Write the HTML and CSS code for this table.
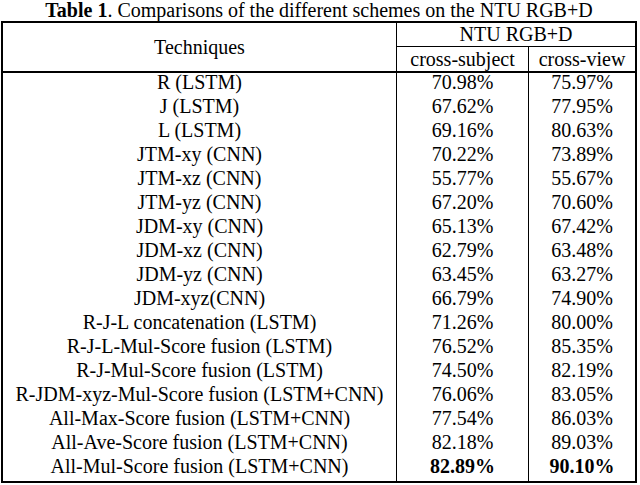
FILE: index.html
```html
<!DOCTYPE html>
<html>
<head>
<meta charset="utf-8">
<link rel="stylesheet" href="styles.css">
</head>
<body>
<div class="wrap">
<table class="cmp">
<caption><b>Table 1</b>. Comparisons of the different schemes on the NTU RGB+D</caption>
<colgroup><col class="c1"><col class="c2"><col class="c3"></colgroup>
<thead>
<tr class="h1"><th rowspan="2" class="tech">Techniques</th><th colspan="2" class="ntu">NTU RGB+D</th></tr>
<tr class="h2"><th class="sub">cross-subject</th><th class="view">cross-view</th></tr>
</thead>
<tbody>
<tr><td>R (LSTM)</td><td>70.98%</td><td>75.97%</td></tr>
<tr><td>J (LSTM)</td><td>67.62%</td><td>77.95%</td></tr>
<tr><td>L (LSTM)</td><td>69.16%</td><td>80.63%</td></tr>
<tr><td>JTM-xy (CNN)</td><td>70.22%</td><td>73.89%</td></tr>
<tr><td>JTM-xz (CNN)</td><td>55.77%</td><td>55.67%</td></tr>
<tr><td>JTM-yz (CNN)</td><td>67.20%</td><td>70.60%</td></tr>
<tr><td>JDM-xy (CNN)</td><td>65.13%</td><td>67.42%</td></tr>
<tr><td>JDM-xz (CNN)</td><td>62.79%</td><td>63.48%</td></tr>
<tr><td>JDM-yz (CNN)</td><td>63.45%</td><td>63.27%</td></tr>
<tr><td>JDM-xyz(CNN)</td><td>66.79%</td><td>74.90%</td></tr>
<tr><td>R-J-L concatenation (LSTM)</td><td>71.26%</td><td>80.00%</td></tr>
<tr><td>R-J-L-Mul-Score fusion (LSTM)</td><td>76.52%</td><td>85.35%</td></tr>
<tr><td>R-J-Mul-Score fusion (LSTM)</td><td>74.50%</td><td>82.19%</td></tr>
<tr><td>R-JDM-xyz-Mul-Score fusion (LSTM+CNN)</td><td>76.06%</td><td>83.05%</td></tr>
<tr><td>All-Max-Score fusion (LSTM+CNN)</td><td>77.54%</td><td>86.03%</td></tr>
<tr><td>All-Ave-Score fusion (LSTM+CNN)</td><td>82.18%</td><td>89.03%</td></tr>
<tr><td>All-Mul-Score fusion (LSTM+CNN)</td><td class="best">82.89%</td><td class="best">90.10%</td></tr>
</tbody>
</table>
</div>
</body>
</html>
```
FILE: styles.css
```css
html, body {
  margin: 0;
  padding: 0;
  background: #fff;
}
body {
  font-family: "Liberation Serif", "Times New Roman", Times, "DejaVu Serif", serif;
  color: #000;
}
.wrap {
  padding-left: 1px;
}
.cmp {
  width: 636px;
  table-layout: fixed;
  border-collapse: separate;
  border-spacing: 0;
  border: 2px solid #000;
  font-family: "Liberation Serif", "Times New Roman", Times, "DejaVu Serif", serif;
  font-size: 20px;
}
.cmp caption {
  font-size: 20px;
  line-height: 21px;
  text-align: center;
  white-space: nowrap;
}
.c1 { width: 394px; }
.c2 { width: 132px; }
.c3 { width: 106px; }
.cmp th, .cmp td {
  padding: 0;
  font-weight: normal;
  text-align: center;
  white-space: nowrap;
  box-sizing: border-box;
}
.h1 th { height: 24px; line-height: 23px; }
.h2 th { height: 26px; line-height: 24px; }
.tech {
  border-right: 1px solid #000;
  border-bottom: 2px solid #000;
}
.ntu {
  border-bottom: 1px solid #000;
}
.sub {
  border-right: 1px solid #000;
  border-bottom: 2px solid #000;
}
.view {
  border-bottom: 2px solid #000;
}
.cmp td {
  height: 24px;
  line-height: 19.5px;
  padding-bottom: 4.5px;
}
.cmp td:nth-child(1),
.cmp td:nth-child(2) {
  border-right: 1px solid #000;
}
.cmp td.best {
  font-weight: bold;
}
```
